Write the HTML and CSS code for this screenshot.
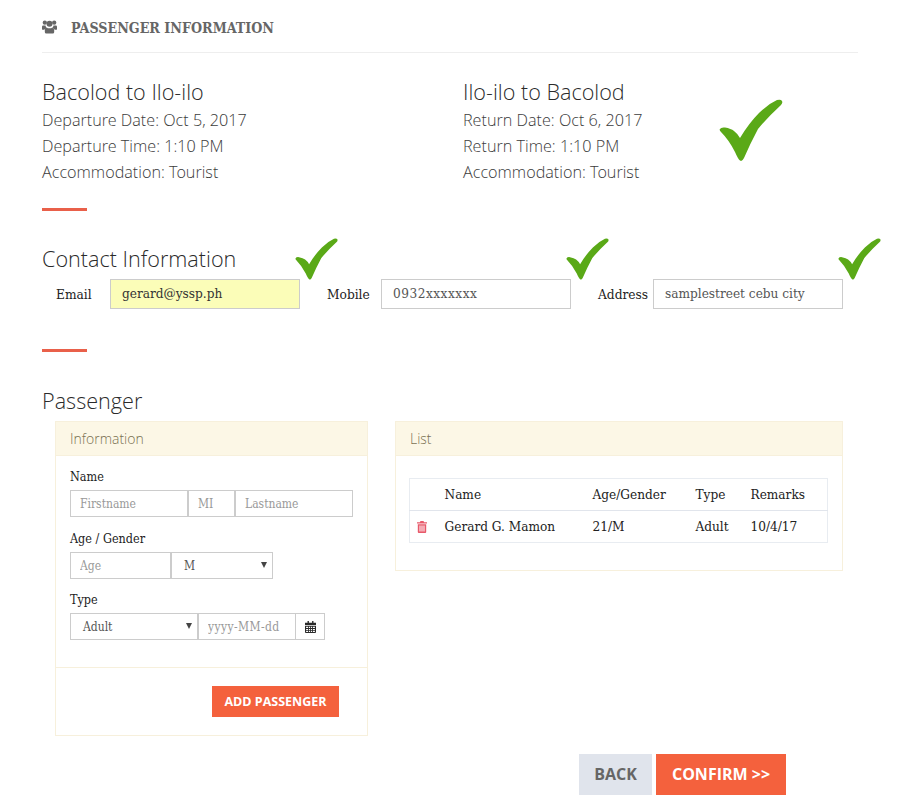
FILE: index.html
```html
<!DOCTYPE html>
<html lang="en">
<head>
<meta charset="utf-8">
<title>Passenger Information</title>
<link rel="stylesheet" href="styles.css">
</head>
<body>
<svg class="defs" width="0" height="0" aria-hidden="true">
  <symbol id="check" viewBox="0 0 64 64">
    <path d="M1 30Q2 28 6 28.500Q12 29.500 15 32Q19 35 21 39Q30 24 40 14Q49 5 58 1Q62 0 63 2Q64 4 62 6Q49 18 39 30Q31 45 25 59Q23 63 21 61.500Q19 60 16 53Q10 41 2 33Q0 31 1 30Z"/>
  </symbol>
</svg>
<main class="page">
  <header class="title">
    <svg class="users-icon" viewBox="0 0 16 14"><circle cx="3" cy="2.400" r="2.300"/><circle cx="13" cy="2.400" r="2.300"/><circle cx="8" cy="3.600" r="3.200"/><path d="M0 6.800Q0 5.400 1.200 5.400L3.800 5.400Q4 7 4.700 8Q3 8.400 2.500 10L1 10Q0 10 0 9ZM16 6.800Q16 5.400 14.800 5.400L12.200 5.400Q12 7 11.300 8Q13 8.400 13.500 10L15 10Q16 10 16 9ZM5 7.400Q6 8.400 8 8.400Q10 8.400 11 7.400Q13 8 13 10.500L13 12.400Q13 14 11.400 14L4.600 14Q3 14 3 12.400L3 10.500Q3 8 5 7.400Z"/></svg>
    <h1>PASSENGER INFORMATION</h1>
  </header>

  <section class="routes">
    <div class="route">
      <h2>Bacolod to Ilo-ilo</h2>
      <p>Departure Date: Oct 5, 2017</p>
      <p>Departure Time: 1:10 PM</p>
      <p>Accommodation: Tourist</p>
    </div>
    <div class="route">
      <h2>Ilo-ilo to Bacolod</h2>
      <p>Return Date: Oct 6, 2017</p>
      <p>Return Time: 1:10 PM</p>
      <p>Accommodation: Tourist</p>
      <svg class="check check-big"><use href="#check"/></svg>
    </div>
  </section>
  <div class="rule"></div>

  <section class="contact">
    <h2>Contact Information</h2>
    <div class="contact-row">
      <label class="field">
        <span class="field-label">Email</span>
        <span class="check-wrap"><input class="text-input is-valid" value="gerard@yssp.ph"><svg class="check check-small"><use href="#check"/></svg></span>
      </label>
      <label class="field">
        <span class="field-label">Mobile</span>
        <span class="check-wrap"><input class="text-input input-spaced" value="0932xxxxxxx"><svg class="check check-small"><use href="#check"/></svg></span>
      </label>
      <label class="field">
        <span class="field-label field-label-wide">Address</span>
        <span class="check-wrap"><input class="text-input" value="samplestreet cebu city"><svg class="check check-small"><use href="#check"/></svg></span>
      </label>
    </div>
  </section>
  <div class="rule rule-second"></div>

  <section class="passenger">
    <h2>Passenger</h2>
    <div class="panels">
      <div class="panel panel-info">
        <div class="panel-head">Information</div>
        <div class="panel-body form-body">
          <div class="form-label">Name</div>
          <div class="group">
            <input class="cell w-firstname" placeholder="Firstname">
            <input class="cell w-mi" placeholder="MI">
            <input class="cell w-lastname" placeholder="Lastname">
          </div>
          <div class="form-label form-label-next">Age / Gender</div>
          <div class="group">
            <input class="cell w-age" placeholder="Age">
            <span class="select-box w-gender"><span>M</span></span>
          </div>
          <div class="form-label form-label-last">Type</div>
          <div class="group">
            <span class="select-box w-type"><span>Adult</span></span>
            <input class="cell w-date" placeholder="yyyy-MM-dd">
            <span class="addon">
              <svg class="cal-icon" viewBox="0 0 13 14"><path d="M3 0h1.600v2H3zM8.400 0H10v2H8.400zM0 2h13v2.600H0zM0 5.400h13V13q0 1-1 1H1q-1 0-1-1zM1.300 6.700v1.600h2.300V6.700zm3.300 0v1.600h1.400V6.700zm2.400 0v1.600h1.400V6.700zm2.400 0v1.600h2.300V6.700zM1.300 9.300v1.400h2.300V9.300zm3.300 0v1.400h1.400V9.300zm2.400 0v1.400h1.400V9.300zm2.400 0v1.400h2.300V9.300zM1.300 11.600v1.200h2.300v-1.200zm3.300 0v1.200h1.400v-1.200zm2.400 0v1.200h1.400v-1.200zm2.400 0v1.200h2.300v-1.200z" fill-rule="evenodd"/></svg>
            </span>
          </div>
        </div>
        <div class="panel-foot"><button class="btn btn-add">ADD PASSENGER</button></div>
      </div>

      <div class="panel panel-list">
        <div class="panel-head">List</div>
        <div class="panel-body list-body">
          <table class="list-table">
            <thead>
              <tr><th class="c-del"></th><th class="c-name">Name</th><th class="c-age">Age/Gender</th><th class="c-type">Type</th><th>Remarks</th></tr>
            </thead>
            <tbody>
              <tr>
                <td class="c-del"><svg class="trash-icon" viewBox="0 0 10 12"><path d="M3.500 0h3l.6 1.200H10v1.200H0V1.200h2.900zM.8 3.200h8.400V11q0 1-1 1H1.800q-1 0-1-1zM2.500 4.500v6h1v-6zm2 0v6h1v-6zm2 0v6h1v-6z" fill-rule="evenodd"/></svg></td>
                <td>Gerard G. Mamon</td><td>21/M</td><td>Adult</td><td>10/4/17</td>
              </tr>
            </tbody>
          </table>
        </div>
      </div>
    </div>
  </section>

  <div class="actions">
    <button class="btn btn-large btn-back">BACK</button>
    <button class="btn btn-large btn-confirm">CONFIRM &gt;&gt;</button>
  </div>
</main>
</body>
</html>
```

FILE: styles.css
```css
* { box-sizing: border-box; }
html, body { margin: 0; padding: 0; }
body {
  background: #fff;
  color: #222;
  font-family: "DejaVu Serif Condensed", "DejaVu Serif", serif;
  font-size: 13.600px;
}
.defs { position: absolute; }
.page { width: 816px; margin-left: 42px; height: 807px; }

.title {
  height: 53px;
  border-bottom: 1px solid #eee;
  display: flex;
  align-items: center;
  padding-top: 3px;
  gap: 14px;
}
.users-icon { width: 15px; height: 14px; fill: #666; margin-bottom: 2px; }
.title h1 { margin: 0; font-size: 14.150px; font-weight: 700; color: #666; }

h2 {
  margin: 0;
  padding-top: 1px;
  font-family: "Open Sans Light", "Open Sans", sans-serif;
  font-weight: 300;
  font-size: 21.600px;
  line-height: 25px;
  color: #2a2a2a;
}
.routes {
  display: grid;
  grid-template-columns: 421px 1fr;
  padding-top: 25px;
}
.routes h2 { margin-bottom: 3px; }
.route { position: relative; }
.route p {
  margin: 0;
  font-family: "Open Sans Light", "Open Sans", sans-serif;
  font-weight: 300;
  font-size: 16.200px;
  line-height: 26px;
  color: #3c3c3c;
}
.rule { width: 45px; height: 3px; background: #e9604a; margin-top: 23px; }
.rule-second { margin-top: 40px; }

.contact { padding-top: 34px; }
.contact h2 { margin-bottom: 8px; }
.contact-row { display: flex; padding-left: 14px; }
.field { display: flex; flex: none; align-items: center; width: 271px; }
.field-label { width: 54px; font-size: 13.600px; padding-bottom: 1px; }
.field-label-wide { width: 55px; }
.check-wrap { position: relative; display: block; }
.text-input {
  display: block;
  width: 190px;
  height: 30px;
  padding: 0 11px 2px;
  border: 1px solid #ccc;
  background: #fff;
  font: inherit;
  font-size: 13.500px;
  color: #555;
  outline: none;
}
.input-spaced { letter-spacing: .5px; }
.is-valid { background: #fbfdb8; color: #333; }
.check { fill: #5aa917; position: absolute; }
.check-big { width: 64px; height: 64px; left: 256px; top: 21px; }
.check-small { width: 43px; height: 43px; right: -38px; top: -41px; }

.passenger { padding-top: 35px; }
.panels {
  display: flex;
  align-items: flex-start;
  gap: 27px;
  padding-left: 13px;
  margin-top: 8px;
}
.panel { border: 1px solid #f7f0dc; background: #fff; }
.panel-info { width: 313px; height: 315px; display: flex; flex-direction: column; }
.panel-list { width: 448px; height: 150px; }
.panel-head {
  height: 34px;
  background: #fcf7e6;
  border-bottom: 1px solid #f7f0dc;
  padding: 0 14px;
  display: flex;
  align-items: center;
  font-family: "Open Sans Light", "Open Sans", sans-serif;
  font-weight: 300;
  font-size: 14px;
  color: #7a7253;
}
.form-body { padding: 11px 14px 0; flex: 1; }
.form-label { line-height: 19px; height: 23px; color: #222; font-size: 12.500px; }
.form-label-next { margin-top: 12px; }
.form-label-last { margin-top: 11px; }
.group { display: flex; height: 27px; }
.cell, .select-box, .addon {
  height: 27px;
  border: 1px solid #ccc;
  background: #fff;
  font: inherit;
  font-size: 12px;
  color: #555;
  outline: none;
}
.cell { padding: 0 9px; display: block; }
.cell::placeholder { color: #999; opacity: 1; }
.w-firstname { width: 118px; }
.w-mi { width: 47px; }
.w-lastname { width: 118px; }
.w-age { width: 101px; }
.w-gender { width: 102px; }
.w-type { width: 128px; }
.w-date { width: 98px; letter-spacing: .4px; }
.select-box {
  position: relative;
  display: flex;
  align-items: center;
  padding-left: 12px;
}
.select-box::after {
  content: "";
  position: absolute;
  right: 5px;
  top: 9px;
  border-left: 3.500px solid transparent;
  border-right: 3.500px solid transparent;
  border-top: 6px solid #444;
}
.addon { width: 29px; border-left: 0; display: flex; align-items: center; justify-content: center; }
.cal-icon { width: 11px; height: 12px; fill: #2a2a2a; }

.panel-foot {
  height: 68px;
  border-top: 1px solid #f7f0dc;
  display: flex;
  justify-content: flex-end;
  align-items: flex-start;
  padding: 18px 28px 0 0;
}
.btn {
  border: 0;
  font-family: "Open Sans", sans-serif;
  font-weight: 700;
  padding: 0;
}
.btn-add {
  width: 127px;
  height: 31px;
  padding-bottom: 1px;
  background: #f4613d;
  color: #fff;
  font-size: 12.500px;
}
.list-body { padding: 22px 14px 0 13px; }
.list-table {
  width: 419px;
  border-collapse: collapse;
  border: 1px solid #e8ecf1;
}
.list-table th, .list-table td {
  height: 32px;
  padding: 0 0 2px;
  text-align: left;
  font-weight: 400;
  font-size: 13.500px;
  color: #222;
}
.list-table thead tr { border-bottom: 1px solid #e1e5ec; }
.c-del { width: 35px; padding-left: 7px !important; padding-bottom: 0 !important; }
.c-name { width: 148px; }
.c-age { width: 103px; }
.c-type { width: 55px; }
.trash-icon { display: block; width: 10px; height: 12px; fill: #e8596a; }

.actions {
  display: flex;
  justify-content: flex-end;
  gap: 4px;
  padding-right: 72px;
  margin-top: 18px;
}
.btn-large { height: 41px; font-size: 16px; padding-bottom: 2px; }
.btn-back { width: 73px; background: #e0e4ec; color: #666; }
.btn-confirm { width: 130px; background: #f4613d; color: #fff; }
```
